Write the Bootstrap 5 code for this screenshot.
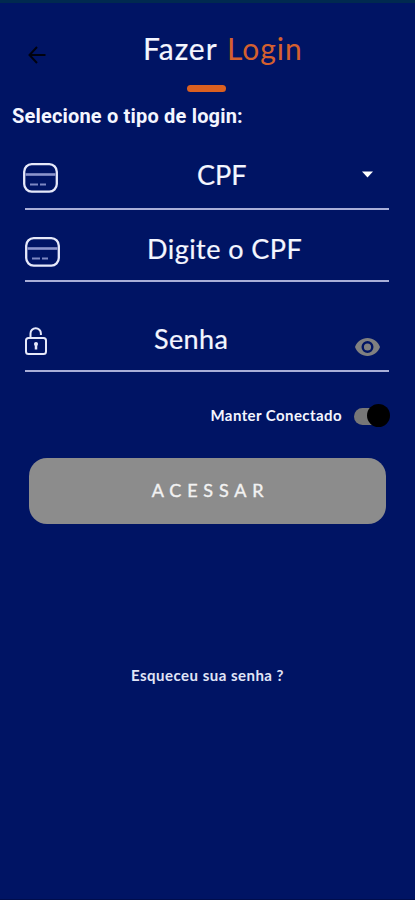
<!DOCTYPE html>
<html lang="pt-BR">
<head>
<meta charset="utf-8">
<meta name="viewport" content="width=device-width, initial-scale=1">
<title>Fazer Login</title>
<link href="https://cdn.jsdelivr.net/npm/bootstrap@5.3.0/dist/css/bootstrap.min.css" rel="stylesheet">
<style>
  body { background: #001464; color: #f4f6ff; font-family: Lato, "Open Sans", sans-serif; }
  .screen { height: 900px; border-top: 3px solid #00294f; border-bottom: 1px solid #000d4c; }
  .screen svg { display: block; flex: none; }
  .top-bar { height: 82px; padding: 0 28px; }
  .back { margin-top: 43px; color: #00020f; }
  .heading { font-size: 30px; line-height: 36px; margin: 27px 0 0 97px; letter-spacing: .95px; word-spacing: 1.5px; }
  .heading span:first-child, .field span { -webkit-text-stroke: .2px currentColor; }
  .accent { color: #d4602f; }
  .accent-bar { width: 39px; height: 7px; margin-left: 187px; background: #db6020; }
  .kind-label { font: 700 20px/24px Roboto, sans-serif; margin: 12px 0 0 12px; letter-spacing: .18px; }
  .fields { margin: 0 26px 0 25px; }
  .field { border-bottom: 2px solid #a9afd8; font-size: 27px; line-height: 32px; }
  .field-kind { height: 82px; padding-top: 30px; }
  .field-cpf { height: 72px; padding-top: 22px; }
  .field-pass { height: 90px; padding-top: 40px; }
  .field-kind .card-icon { margin: 5px 0 0 -2px; }
  .field-cpf .card-icon { margin-top: 5px; }
  .caret { margin: 13px 16px 0 0; }
  .eye { margin: 16px 9px 0 0; }
  .text-kind { margin: 1px 0 0 139px; }
  .text-cpf { margin: 1px 0 0 87px; letter-spacing: .45px; }
  .text-pass { margin: 1px 0 0 107px; letter-spacing: .4px; }
  .keep { height: 24px; margin: 32px 25px 0 0; gap: 12px; font-size: 15px; font-weight: 700; }
  .keep-text { letter-spacing: .42px; margin: -1px 0 1px; }
  .toggle { width: 36px; height: 24px; }
  .track { width: 32px; height: 17px; background: #777; }
  .knob { width: 23px; height: 23px; right: 0; top: 0; background: #000; }
  .enter { width: 357px; height: 66px; margin: 30px 0 0 29px; padding: 0 0 2px 6px; border-radius: 18px; background: #8c8c8c; color: #f2f2f2; font-size: 18px; letter-spacing: 5.8px; border: 0; -webkit-text-stroke: .4px currentColor; }
  .forgot { margin-top: 139px; font-size: 15px; line-height: 24px; font-weight: 700; letter-spacing: .48px; color: #e0e5f7; }
</style>
<script src="https://cdn.jsdelivr.net/npm/bootstrap@5.3.0/dist/js/bootstrap.bundle.min.js"></script>
</head>
<body>
<main class="screen overflow-hidden">
  <header class="top-bar d-flex align-items-start">
    <a class="back" href="#" aria-label="Voltar"><svg width="18" height="18" viewBox="0 0 18 18" fill="none" stroke="currentColor" stroke-width="2"><path d="M17.5 9H2M9 1L1.5 9 9 17"/></svg></a>
    <h1 class="heading fw-normal text-nowrap"><span>Fazer</span> <span class="accent">Login</span></h1>
  </header>
  <div class="accent-bar rounded-pill"></div>
  <p class="kind-label mb-0">Selecione o tipo de login:</p>
  <form class="fields">
    <div class="field field-kind d-flex align-items-start">
      <svg class="card-icon" width="35" height="30" viewBox="0 0 35 30" fill="none" stroke="#e6e9fa"><rect x="1.2" y="1.2" width="32.6" height="27.4" rx="7.5" stroke-width="2.3"/><path d="M2.500 11.500h30" stroke="#8c95cc" stroke-width="2.6"/><path d="M7 21.500h8M17 21.500h6" stroke="#7d87c2" stroke-width="2"/></svg>
      <span class="text-kind">CPF</span>
      <svg class="caret ms-auto" width="11" height="7" viewBox="0 0 11 7" fill="#fff"><path d="M0 .5h11L5.5 6.5z"/></svg>
    </div>
    <div class="field field-cpf d-flex align-items-start">
      <svg class="card-icon" width="35" height="30" viewBox="0 0 35 30" fill="none" stroke="#e6e9fa"><rect x="1.2" y="1.2" width="32.6" height="27.4" rx="7.5" stroke-width="2.3"/><path d="M2.500 11.500h30" stroke="#8c95cc" stroke-width="2.6"/><path d="M7 21.500h8M17 21.500h6" stroke="#7d87c2" stroke-width="2"/></svg>
      <span class="text-cpf text-nowrap">Digite o CPF</span>
    </div>
    <div class="field field-pass d-flex align-items-start">
      <svg class="lock mt-1" width="22" height="29" viewBox="0 0 22 29" fill="none" stroke="#e6e9fa" stroke-width="2"><rect x="1" y="12" width="20" height="16" rx="2.500"/><path d="M5.500 12V7.500a5.200 5.200 0 0 1 10.400 0V9"/><path d="M11 17v6.500" stroke-width="2.500"/><circle cx="11" cy="18" r="1"/></svg>
      <span class="text-pass">Senha</span>
      <svg class="eye ms-auto" width="25" height="18" viewBox="0 0 25 18"><path fill="#808080" fill-rule="evenodd" d="M12.500 0C6.800 0 2 3.700 0 9c2 5.300 6.800 9 12.500 9S23 14.300 25 9C23 3.700 18.200 0 12.500 0Zm0 15a6 6 0 1 1 0-12 6 6 0 0 1 0 12Zm0-2.400a3.600 3.600 0 1 0 0-7.200 3.600 3.600 0 0 0 0 7.200Z"/></svg>
    </div>
  </form>
  <div class="keep d-flex align-items-center justify-content-end">
    <span class="keep-text">Manter Conectado</span>
    <span class="toggle position-relative d-flex align-items-center" role="switch" aria-checked="true" aria-label="Manter Conectado"><span class="track rounded-pill"></span><span class="knob rounded-circle position-absolute"></span></span>
  </div>
  <button class="enter d-block" type="button">ACESSAR</button>
  <p class="forgot text-center mb-0">Esqueceu sua senha ?</p>
</main>
</body>
</html>
